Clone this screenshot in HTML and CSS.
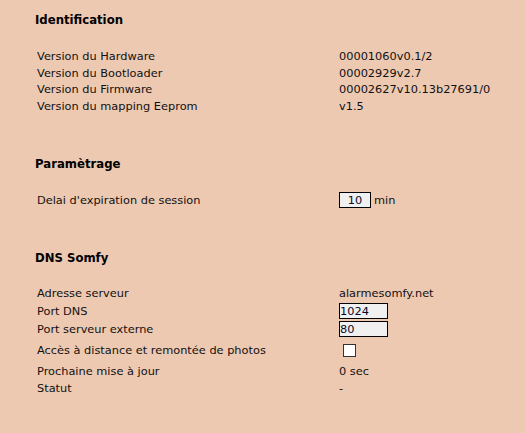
FILE: index.html
```html
<!DOCTYPE html>
<html lang="fr">
<head>
<meta charset="utf-8">
<title>Configuration</title>
<link rel="stylesheet" href="styles.css">
</head>
<body>
<div class="page">
  <section class="section s-ident">
    <h2 class="title">Identification</h2>
    <div class="rows">
      <div class="row r-info"><span class="label">Version du Hardware</span><span class="value">00001060v0.1/2</span></div>
      <div class="row r-info"><span class="label">Version du Bootloader</span><span class="value">00002929v2.7</span></div>
      <div class="row r-info"><span class="label">Version du Firmware</span><span class="value">00002627v10.13b27691/0</span></div>
      <div class="row r-info"><span class="label">Version du mapping Eeprom</span><span class="value">v1.5</span></div>
    </div>
  </section>

  <section class="section s-param">
    <h2 class="title">Paramètrage</h2>
    <div class="rows">
      <div class="row r-session"><span class="label">Delai d'expiration de session</span><span class="value"><input class="num" type="text" value="10"><span class="unit">min</span></span></div>
    </div>
  </section>

  <section class="section s-dns">
    <h2 class="title">DNS Somfy</h2>
    <div class="rows">
      <div class="row r-dns"><span class="label">Adresse serveur</span><span class="value">alarmesomfy.net</span></div>
      <div class="row r-dns"><span class="label">Port DNS</span><span class="value"><input class="port" type="text" value="1024"></span></div>
      <div class="row r-dns"><span class="label">Port serveur externe</span><span class="value"><input class="port" type="text" value="80"></span></div>
      <div class="row r-check"><span class="label">Accès à distance et remontée de photos</span><span class="value"><span class="check"></span></span></div>
      <div class="row r-next"><span class="label">Prochaine mise à jour</span><span class="value">0 sec</span></div>
      <div class="row r-status"><span class="label">Statut</span><span class="value">-</span></div>
    </div>
  </section>
</div>
</body>
</html>
```

FILE: styles.css
```css
html, body {
  margin: 0;
  padding: 0;
  background: #eec9b1;
}
body {
  font-family: "DejaVu Sans", Verdana, sans-serif;
  font-size: 11.35px;
  color: #111;
  width: 525px;
  height: 433px;
  overflow: hidden;
}
.page {
  padding-left: 35px;
  display: flex;
  flex-direction: column;
}
.title {
  margin: 0;
  font-size: 11.7px;
  font-weight: bold;
  line-height: 16px;
  height: 16px;
  color: #000;
}
.s-ident { padding-top: 12px; }
.s-ident .rows { margin-top: 20px; }
.s-param { margin-top: 42px; }
.s-param .rows { margin-top: 18px; }
.s-dns { margin-top: 40px; }
.s-dns .rows { margin-top: 18px; }

.rows {
  display: flex;
  flex-direction: column;
}
.row {
  display: grid;
  grid-template-columns: 302px 1fr;
  align-items: center;
  padding-left: 2px;
}
.r-info { height: 16.5px; }
.r-session { height: 20px; }
.r-dns { height: 18px; }
.r-check { height: 24px; }
.r-next { height: 18px; }
.r-status { height: 16px; }

.value {
  display: flex;
  align-items: center;
}
input {
  font-family: "DejaVu Sans", Verdana, sans-serif;
  font-size: 11.35px;
  color: #0a0a2a;
  background: #f0f0f0;
  border: 1px solid #000;
  margin: 0;
  box-sizing: border-box;
  height: 16px;
  outline: none;
}
.num {
  width: 32px;
  padding: 0 2px;
  text-align: center;
}
.unit { margin-left: 3px; }
.port {
  width: 49px;
  padding: 0;
}
.check {
  display: inline-block;
  box-sizing: border-box;
  width: 13px;
  height: 13px;
  margin-left: 4px;
  background: #fff;
  border: 1px solid #333;
}
```
